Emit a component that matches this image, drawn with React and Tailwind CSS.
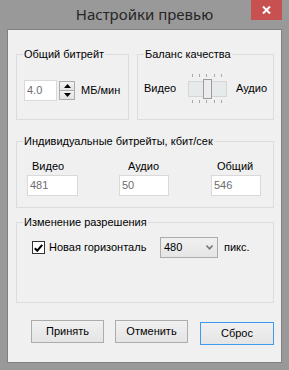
import React from 'react';

const Legend = ({ children }) => (
    <legend className="ml-[6px] px-[1px] text-[11px] leading-[12px] text-black">{children}</legend>
);

const Field = ({ value, className }) => (
    <div className={`h-[21px] bg-white border border-[#d9d9d9] pl-[2px] text-[11px] leading-[19px] text-[#6d6d6d] ${className}`}>
        {value}
    </div>
);

const Button = ({ children, focused }) => (
    <button
        className={`w-[74px] h-[23px] border bg-linear-to-b from-[#f0f0f0] to-[#e5e5e5] text-[11px] leading-[21px] text-black ${focused ? 'border-[#3c9af0]' : 'border-[#acacac]'}`}
    >
        {children}
    </button>
);

const Slider = () => {
    const ticks = [5, 12, 19, 27, 34];
    return (
        <svg width="41" height="31" viewBox="0 0 41 31" className="shrink-0">
            {ticks.map((x) => (
                <g key={x} stroke="#a8a8a8" strokeWidth="1">
                    <line x1={x + 0.5} y1="1" x2={x + 0.5} y2="4" />
                    <line x1={x + 0.5} y1="27" x2={x + 0.5} y2="30" />
                </g>
            ))}
            <rect x="1.5" y="8.5" width="38" height="15" fill="#e7eaea" stroke="#d6d6d6" />
            <rect x="16.5" y="6.5" width="8" height="19" fill="#ececec" stroke="#9c9c9c" />
        </svg>
    );
};

export default function App() {
    return (
        <div className="w-[289px] h-[370px] bg-[#999999] flex flex-col font-['Liberation_Sans',Arial,sans-serif] text-black">
            {/* Title bar */}
            <div className="h-[29px] shrink-0 grid grid-cols-[38px_1fr_38px]">
                <div />
                <div className="text-center font-['Noto_Sans',sans-serif] text-[15px] leading-[29px] text-[#262626]">
                    Настройки превью
                </div>
                <div>
                    <div className="w-[31px] h-[20px] bg-[#c75050] flex items-center justify-center">
                        <svg width="9" height="8" viewBox="0 0 9 8">
                            <path d="M1 0.5 L8 7.5 M8 0.5 L1 7.5" stroke="#ffffff" strokeWidth="2" />
                        </svg>
                    </div>
                </div>
            </div>

            {/* Client area */}
            <div className="mx-[7px] h-[334px] border border-[#808080] bg-[#f0f0f0] pl-[8px] pr-[7px] pt-[18px] flex flex-col">
                <div className="flex gap-[8px]">
                    <fieldset className="w-[113px] h-[72px] border border-[#dcdcdc]">
                        <Legend>Общий битрейт</Legend>
                        <div className="flex items-center pl-[7px] pt-[20px] text-[11px]">
                            <Field value="4.0" className="w-[33px] h-[20px]" />
                            <div className="ml-[2px] w-[16px] h-[19px] flex flex-col">
                                <div className="h-[10px] border border-[#acacac] bg-linear-to-b from-[#f2f2f2] to-[#e3e3e3] flex items-center justify-center">
                                    <svg width="7" height="4" viewBox="0 0 7 4"><path d="M3.5 0 L7 4 L0 4 Z" fill="#000" /></svg>
                                </div>
                                <div className="h-[9px] border border-t-0 border-[#acacac] bg-linear-to-b from-[#f2f2f2] to-[#e3e3e3] flex items-center justify-center">
                                    <svg width="7" height="4" viewBox="0 0 7 4"><path d="M0 0 L7 0 L3.5 4 Z" fill="#000" /></svg>
                                </div>
                            </div>
                            <span className="ml-[6px]">МБ/мин</span>
                        </div>
                    </fieldset>
                    <fieldset className="flex-1 h-[72px] border border-[#dcdcdc]">
                        <Legend>Баланс качества</Legend>
                        <div className="flex items-center pl-[6px] pt-[13px] text-[11px]">
                            <span className="w-[43px]">Видео</span>
                            <Slider />
                            <span className="ml-[8px]">Аудио</span>
                        </div>
                    </fieldset>
                </div>

                <fieldset className="mt-[15px] h-[73px] border border-[#dcdcdc]">
                    <Legend>Индивидуальные битрейты, кбит/сек</Legend>
                    <div className="flex pt-[13px] text-[11px] leading-[13px]">
                        <div className="ml-[10px] w-[51px] flex flex-col">
                            <span className="ml-[5px] mb-[2px]">Видео</span>
                            <Field value="481" className="w-full" />
                        </div>
                        <div className="ml-[41px] w-[50px] flex flex-col">
                            <span className="ml-[9px] mb-[2px]">Аудио</span>
                            <Field value="50" className="w-full" />
                        </div>
                        <div className="ml-[42px] w-[50px] flex flex-col">
                            <span className="ml-[6px] mb-[2px]">Общий</span>
                            <Field value="546" className="w-full" />
                        </div>
                    </div>
                </fieldset>

                <fieldset className="mt-[8px] h-[87px] border border-[#dcdcdc]">
                    <Legend>Изменение разрешения</Legend>
                    <div className="flex items-center pl-[15px] pt-[9px] text-[11px]">
                        <div className="w-[13px] h-[13px] bg-white border border-[#333333] flex items-center justify-center">
                            <svg width="9" height="8" viewBox="0 0 9 8">
                                <path d="M0.8 4.2 L3.3 6.7 L8.2 0.8" stroke="#000" strokeWidth="2" fill="none" />
                            </svg>
                        </div>
                        <span className="ml-[4px] w-[111px]">Новая горизонталь</span>
                        <div className="w-[58px] h-[21px] border border-[#acacac] bg-linear-to-b from-[#f0f0f0] to-[#e5e5e5] flex items-center justify-between pl-[3px] pr-[4px]">
                            <span>480</span>
                            <svg width="7" height="5" viewBox="0 0 7 5">
                                <path d="M0.5 0.5 L3.5 3.8 L6.5 0.5" stroke="#7a7a7a" strokeWidth="1.6" fill="none" />
                            </svg>
                        </div>
                        <span className="ml-[6px]">пикс.</span>
                    </div>
                </fieldset>

                <div className="mt-[17px] pl-[15px] flex gap-[11px]">
                    <Button>Принять</Button>
                    <Button>Отменить</Button>
                    <div className="ml-[1px]">
                        <Button focused>Сброс</Button>
                    </div>
                </div>
            </div>
        </div>
    );
}
